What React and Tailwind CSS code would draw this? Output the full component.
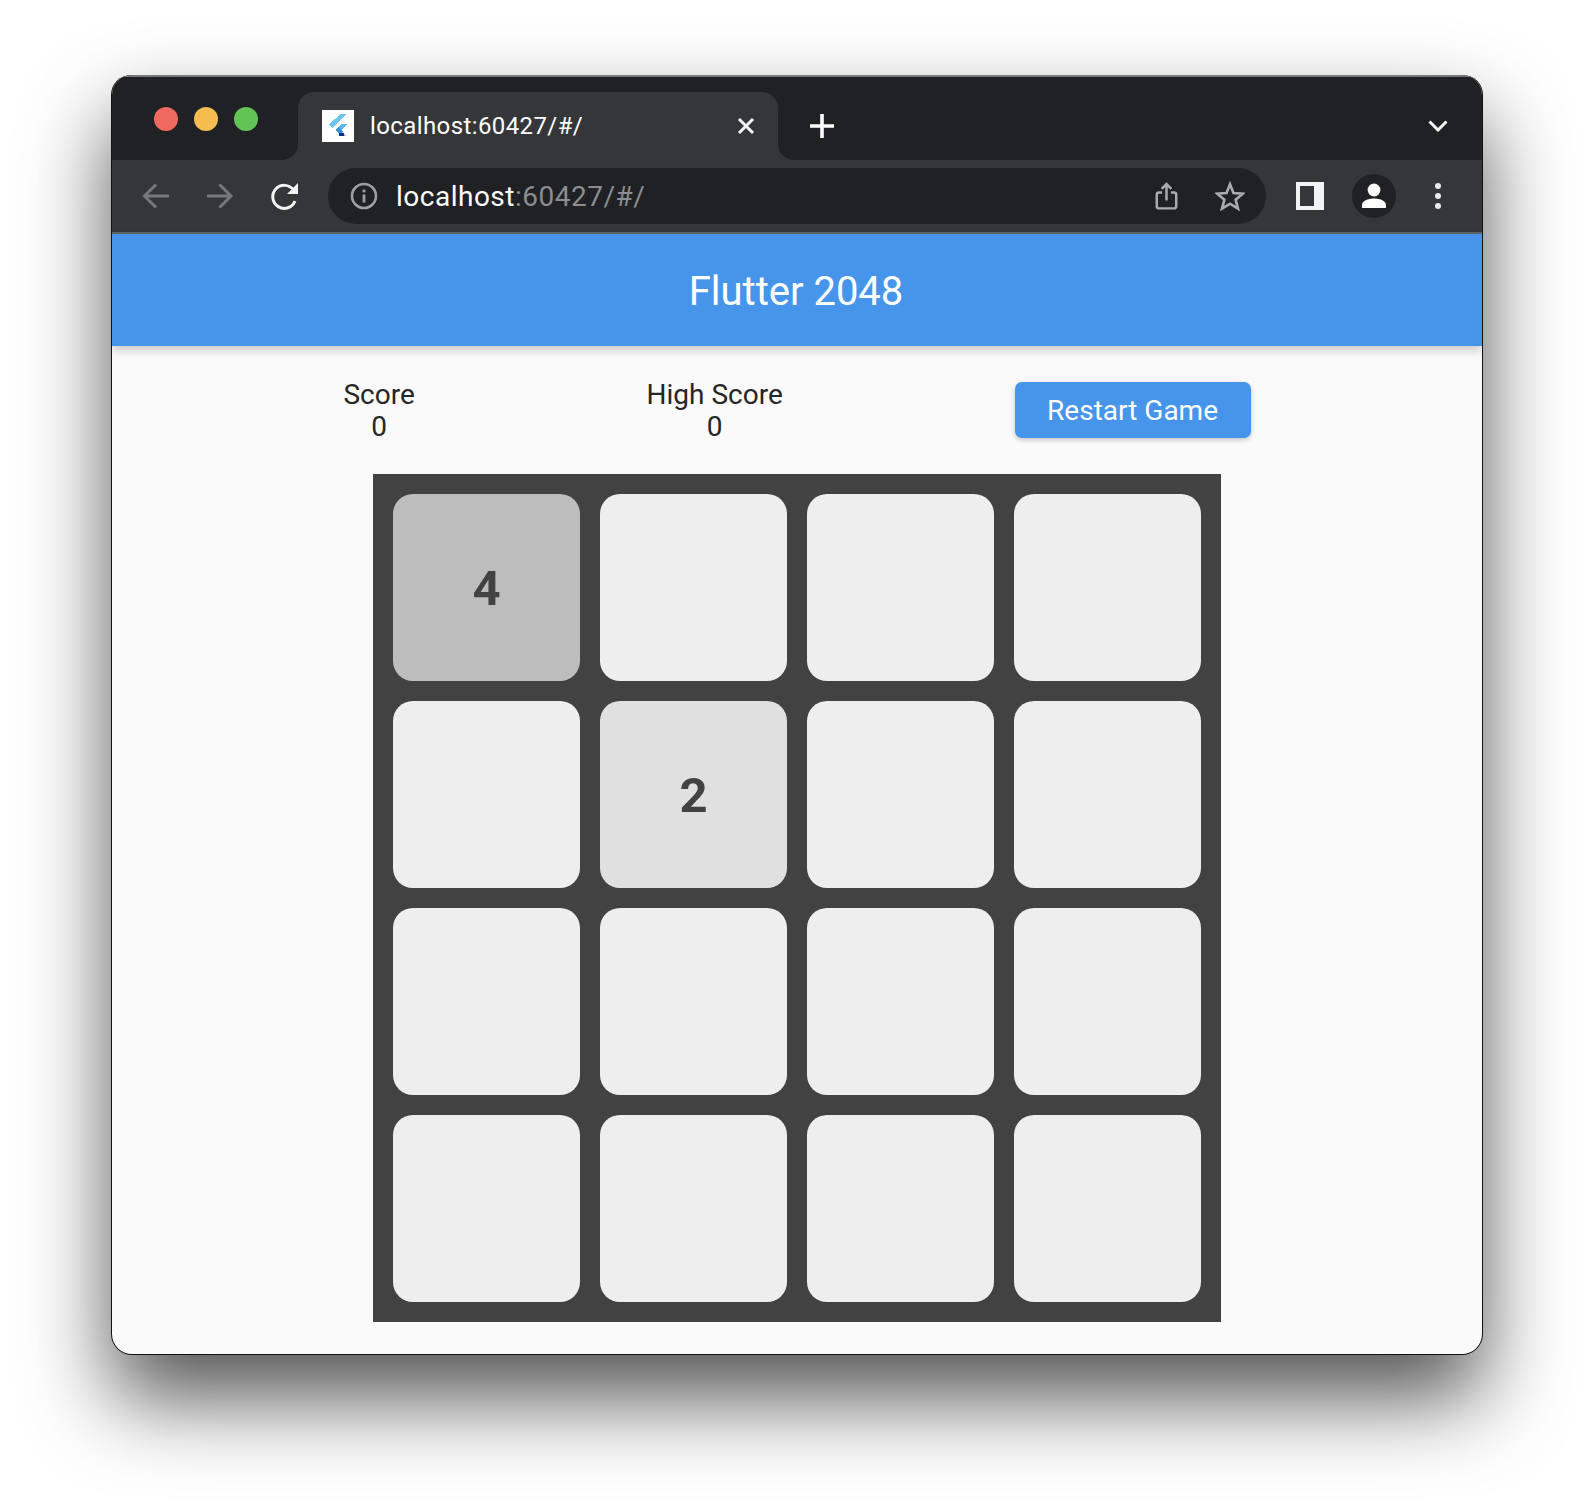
import React from "react";

const cells = [4, 0, 0, 0, 0, 2, 0, 0, 0, 0, 0, 0, 0, 0, 0, 0];

function Favicon() {
  return (
    <svg width="32" height="32" viewBox="0 0 32 32" className="shrink-0" shapeRendering="crispEdges">
      <rect width="32" height="32" fill="#fff" />
      <path d="M7 14 L19 4 L25 4 L10 18 Z" fill="#6cc4f5" />
      <path d="M13 20 L19 14 L25 14 L18 21 Z" fill="#5ab8f0" />
      <path d="M13 20 L17 17 L21 22 L18 24 Z" fill="#3a8fdc" />
      <path d="M17 24 L21 22 L24 26 L19 26 Z" fill="#a9b7d8" />
      <rect x="17" y="23" width="5" height="3" fill="#0d2a86" />
    </svg>
  );
}

function Toolbar() {
  return (
    <div className="flex h-[72px] items-center bg-[#35363a]">
      <svg width="32" height="32" viewBox="0 0 32 32" fill="none" stroke="#76787b" strokeWidth="3" className="ml-[28px] shrink-0">
        <path d="M29 16H6M16 4.500 4.500 16 16 27.500" />
      </svg>
      <svg width="32" height="32" viewBox="0 0 32 32" fill="none" stroke="#76787b" strokeWidth="3" className="ml-[32px] shrink-0">
        <path d="M3 16h23M15.500 4.500 27 16 15.500 27.500" />
      </svg>
      <svg width="32" height="32" viewBox="0 0 32 32" className="ml-[33px] shrink-0">
        <path d="M26 21a11.500 11.500 0 1 1-1.500-11" fill="none" stroke="#f1f3f4" strokeWidth="3" />
        <path d="M29 3v11H18z" fill="#f1f3f4" />
      </svg>
      <div className="ml-[27px] flex h-[56px] w-[938px] shrink-0 items-center rounded-full bg-[#202124]">
        <svg width="28" height="28" viewBox="0 0 28 28" className="ml-[22px] shrink-0">
          <circle cx="14" cy="14" r="12" fill="none" stroke="#9aa0a6" strokeWidth="2.6" />
          <rect x="12.6" y="12.5" width="2.8" height="8" fill="#9aa0a6" />
          <rect x="12.6" y="7.6" width="2.8" height="2.8" fill="#9aa0a6" />
        </svg>
        <span className="ml-[18px] pt-[2px] text-[28px] leading-none tracking-[0.5px] text-white">
          localhost<span className="text-[#8a8d91]">:60427/#/</span>
        </span>
        <svg width="23" height="30" viewBox="0 0 26 32" fill="none" stroke="#a8abaf" strokeWidth="2.8" className="ml-auto shrink-0">
          <path d="M8 12H4.500A2.500 2.500 0 0 0 2 14.500v13A2.500 2.500 0 0 0 4.500 30h17a2.500 2.500 0 0 0 2.500-2.500v-13a2.500 2.500 0 0 0-2.500-2.500H18" />
          <path d="M13 21V3M7.500 8 13 2.500 18.500 8" />
        </svg>
        <svg width="30" height="30" viewBox="0 0 32 32" fill="none" stroke="#a8abaf" strokeWidth="2.8" className="ml-[37px] mr-[21px] shrink-0">
          <path d="M16 3.500 19.700 12.800 29.700 13.500 22 19.900 24.500 29.500 16 24.200 7.500 29.500 10 19.900 2.300 13.500 12.300 12.800Z" />
        </svg>
      </div>
      <div className="ml-[30px] h-[28px] w-[28px] shrink-0 bg-[#f1f3f4] p-[4px]">
        <div className="h-full w-[14px] bg-[#35363a]" />
      </div>
      <div className="ml-[28px] flex h-[44px] w-[44px] shrink-0 items-center justify-center rounded-full bg-[#202124]">
        <svg width="26" height="26" viewBox="0 0 26 26" fill="#fff">
          <circle cx="13" cy="7" r="6.400" />
          <path d="M1 25v-3c0-4.500 7-6.500 12-6.500S25 17.500 25 22v3z" />
        </svg>
      </div>
      <div className="ml-[39px] flex flex-col gap-[4px]">
        <div className="h-[6px] w-[6px] rounded-full bg-[#e8eaed]" />
        <div className="h-[6px] w-[6px] rounded-full bg-[#e8eaed]" />
        <div className="h-[6px] w-[6px] rounded-full bg-[#e8eaed]" />
      </div>
    </div>
  );
}

function TabStrip() {
  return (
    <div className="flex h-[85px] items-end border-t-2 border-[#77787a] bg-[#202124]">
      <div className="ml-[42px] flex h-[67px] shrink-0 self-start gap-[16px] pt-[30px]">
        <div className="h-[24px] w-[24px] rounded-full bg-[#ee6a5f]" />
        <div className="h-[24px] w-[24px] rounded-full bg-[#f5bd4f]" />
        <div className="h-[24px] w-[24px] rounded-full bg-[#61c454]" />
      </div>
      <div className="relative ml-[40px] flex h-[68px] w-[480px] shrink-0 items-center rounded-t-[16px] bg-[#35363a] pl-[24px]">
        <div className="absolute -left-[16px] bottom-0 h-[16px] w-[16px] bg-[#35363a]">
          <div className="h-full w-full rounded-br-[16px] bg-[#202124]" />
        </div>
        <div className="absolute -right-[16px] bottom-0 h-[16px] w-[16px] bg-[#35363a]">
          <div className="h-full w-full rounded-bl-[16px] bg-[#202124]" />
        </div>
        <Favicon />
        <span className="ml-[16px] text-[24px] leading-none tracking-[0.4px] text-white">localhost:60427/#/</span>
        <svg width="18" height="18" viewBox="0 0 18 18" stroke="#f1f3f4" strokeWidth="3" className="ml-auto mr-[23px] shrink-0">
          <path d="M2 2l14 14M16 2 2 16" />
        </svg>
      </div>
      <svg width="26" height="26" viewBox="0 0 26 26" stroke="#fff" strokeWidth="3.600" className="mb-[21px] ml-[31px] shrink-0">
        <path d="M13 1v24M1 13h24" />
      </svg>
      <svg width="20" height="12" viewBox="0 0 20 12" fill="none" stroke="#f1f3f4" strokeWidth="3" className="mb-[28px] ml-auto mr-[34px] shrink-0">
        <path d="M1.500 1.500 10 10l8.500-8.500" />
      </svg>
    </div>
  );
}

export default function App() {
  return (
    <div className="h-[1502px] w-[1594px] overflow-hidden bg-white px-[112px] pt-[75px] font-['Roboto',sans-serif]">
      <div className="h-[1279px] overflow-hidden rounded-[20px] bg-[#fafafa] shadow-[0_1px_0_0_#111,1px_0_0_0_#111,-1px_0_0_0_#111,0_44px_85px_rgba(0,0,0,0.68)]">
        <TabStrip />
        <Toolbar />
        <div className="h-[2px] bg-[#5f6368]" />

        {/* App bar */}
        <div className="relative flex h-[112px] items-center justify-center bg-[#4695eb] pr-[2px] pt-[4px] text-[40px] text-white shadow-[0_4px_10px_rgba(0,0,0,0.2)]">
          Flutter 2048
        </div>

        {/* Scores */}
        <div className="mx-auto mt-[32px] flex h-[64px] w-[1139px] items-center justify-around text-[28px] leading-[32px] text-[#262626]">
          <div className="pt-[2px] text-center">
            <div>Score</div>
            <div>0</div>
          </div>
          <div className="pt-[2px] text-center">
            <div>High Score</div>
            <div>0</div>
          </div>
          <button className="h-[56px] w-[236px] rounded-[7px] bg-[#4695eb] pt-[2px] text-white shadow-[0_2px_5px_rgba(0,0,0,0.22)]">
            Restart Game
          </button>
        </div>

        {/* Board */}
        <div className="mx-auto mt-[32px] grid h-[848px] w-[848px] grid-cols-4 grid-rows-4 gap-[20px] bg-[#424242] p-[20px]">
          {cells.map((v, i) => (
            <div
              key={i}
              className={
                "flex items-center justify-center rounded-[20px] pt-[2px] text-[49px] font-bold text-[#424242] " +
                (v === 4 ? "bg-[#bdbdbd]" : v === 2 ? "bg-[#e0e0e0]" : "bg-[#eeeeee]")
              }
            >
              {v || ""}
            </div>
          ))}
        </div>
      </div>
    </div>
  );
}
